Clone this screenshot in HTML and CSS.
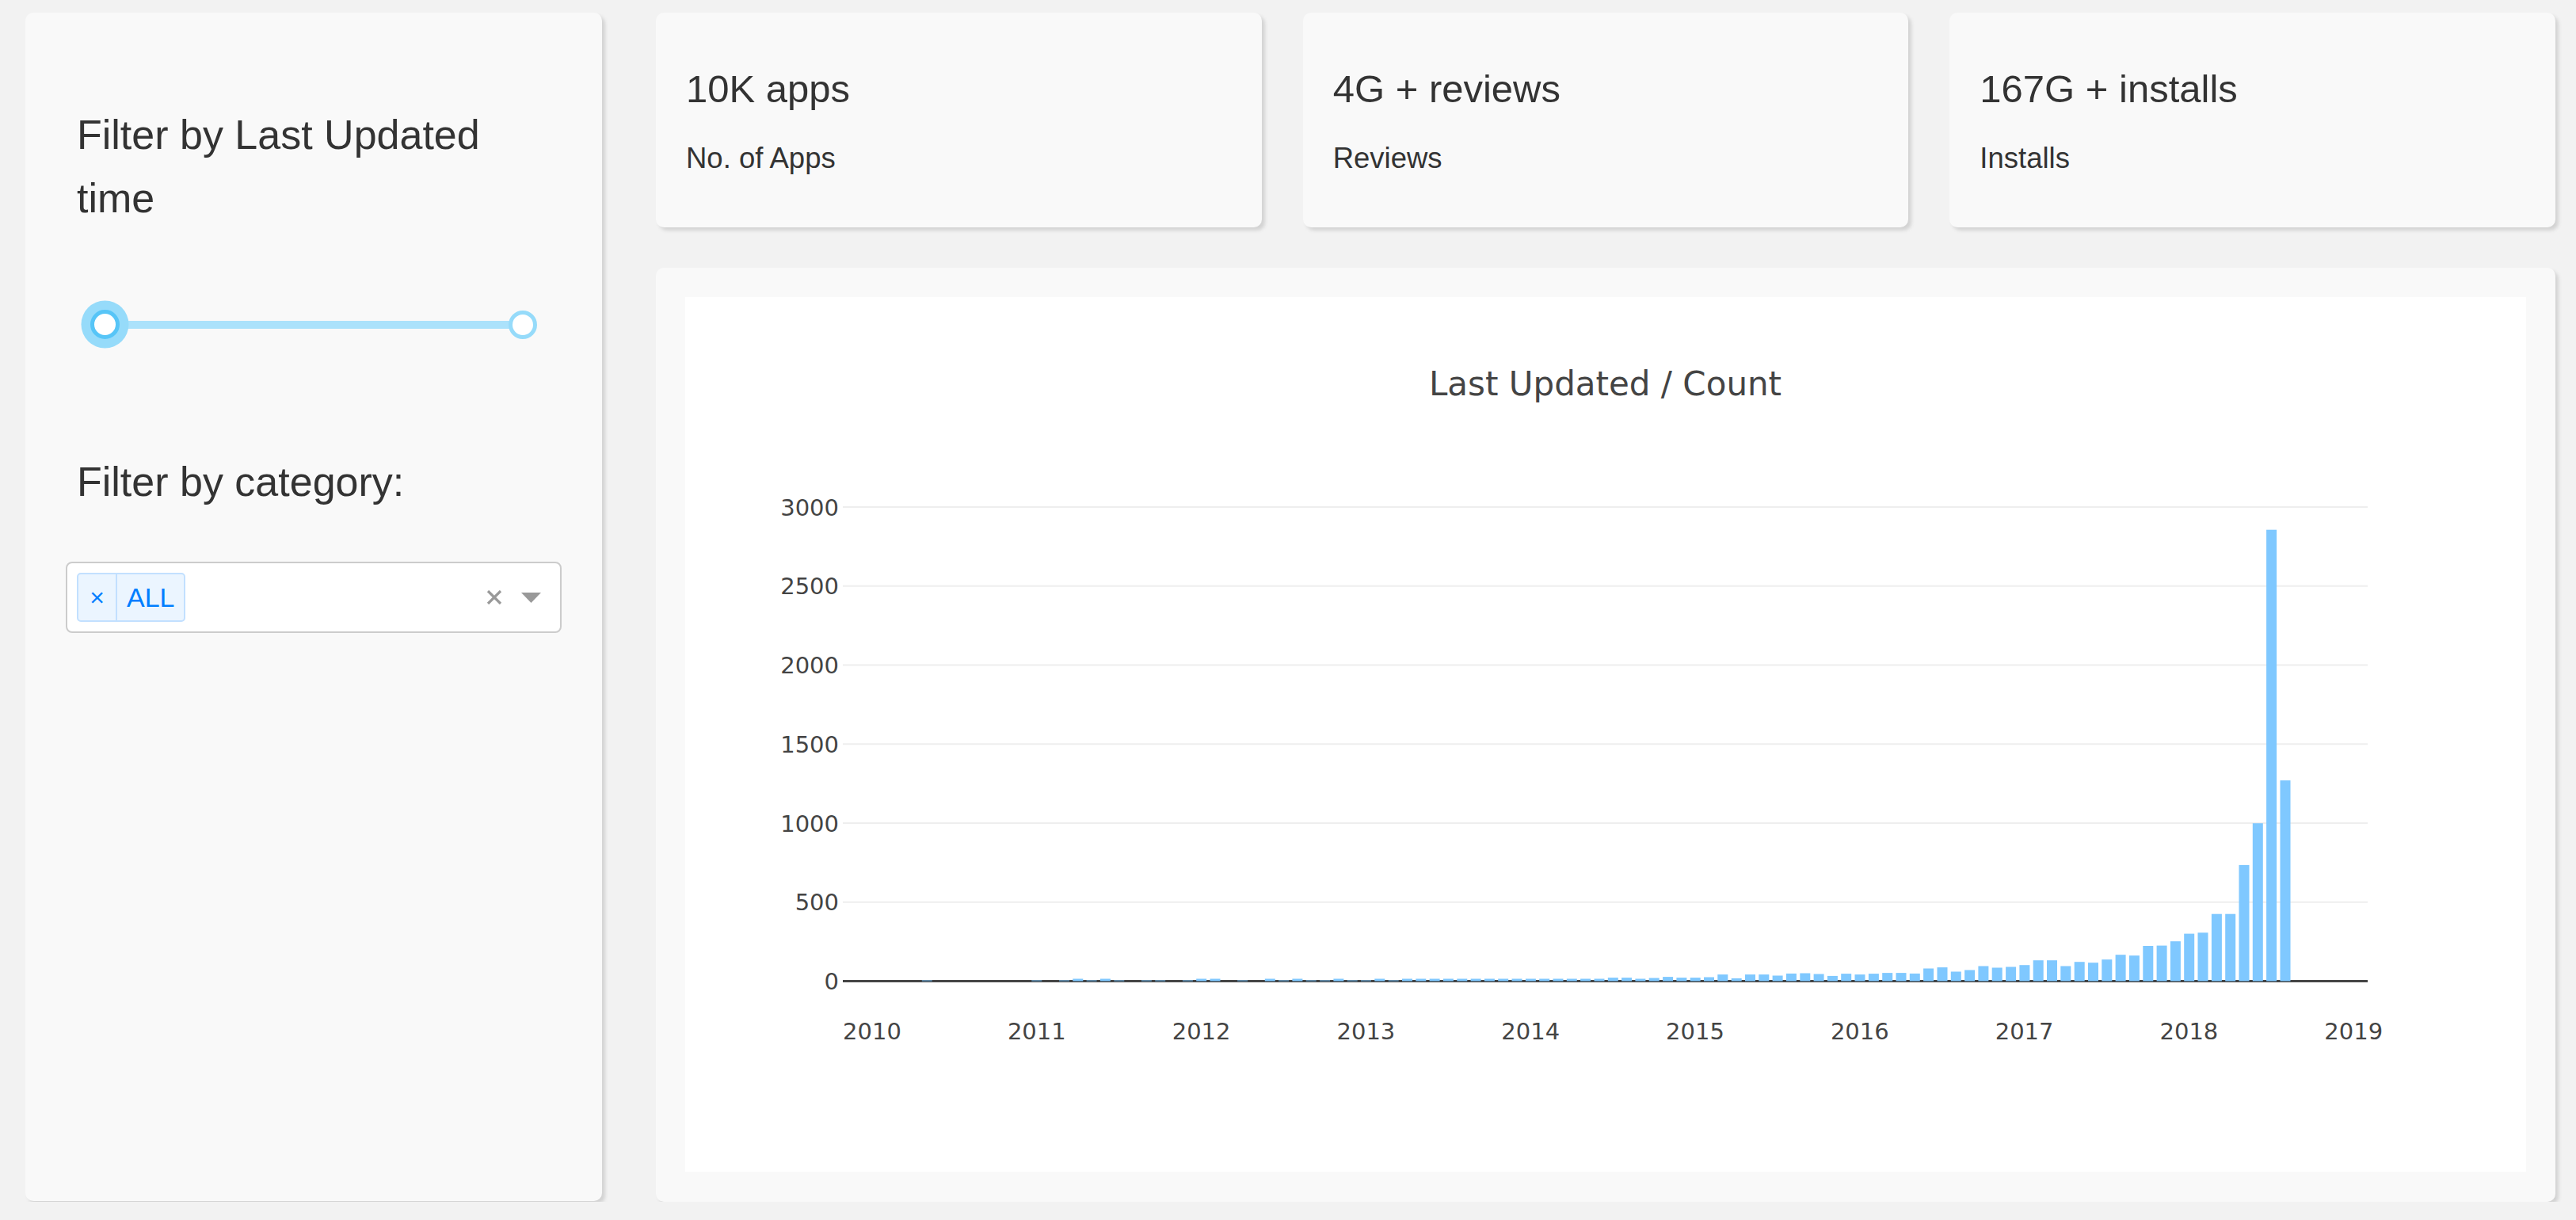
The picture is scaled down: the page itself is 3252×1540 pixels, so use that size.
FILE: index.html
```html
<!DOCTYPE html>
<html lang="en">
<head>
<meta charset="utf-8">
<title>Google Play Store Apps</title>
<link rel="stylesheet" href="styles.css">
</head>
<body>
<div class="page">
  <aside class="card controls">
    <h3 class="control-label">Filter by Last Updated time</h3>
    <div class="slider">
      <div class="slider-track"></div>
      <span class="handle handle-left"></span>
      <span class="handle handle-right"></span>
    </div>
    <h3 class="control-label category-label">Filter by category:</h3>
    <div class="select">
      <div class="tag">
        <span class="tag-icon">×</span>
        <span class="tag-label">ALL</span>
      </div>
      <span class="select-spacer"></span>
      <svg class="clear-icon" width="20" height="18" viewBox="0 0 20 18"><path d="M2 1 L18 17 M18 1 L2 17" stroke="#999" stroke-width="3.2" fill="none"/></svg>
      <svg class="arrow-icon" width="25" height="13" viewBox="0 0 25 13"><polygon points="0,0 25,0 12.5,13" fill="#999"/></svg>
    </div>
  </aside>
  <main class="right-col">
    <div class="stats">
      <div class="card stat">
        <h4 class="stat-value">10K apps</h4>
        <p class="stat-label">No. of Apps</p>
      </div>
      <div class="card stat">
        <h4 class="stat-value">4G + reviews</h4>
        <p class="stat-label">Reviews</p>
      </div>
      <div class="card stat">
        <h4 class="stat-value">167G + installs</h4>
        <p class="stat-label">Installs</p>
      </div>
    </div>
    <div class="card chart-card">
      <svg class="chart" width="2324" height="1104" viewBox="0 0 2324 1104">
        <rect x="0" y="0" width="2324" height="1104" fill="#fff"/>
        <text class="chart-title" x="1161.5" y="124" text-anchor="middle">Last Updated / Count</text>
        <g class="grid">
          <line x1="199" y1="265" x2="2124" y2="265"/>
          <line x1="199" y1="364.75" x2="2124" y2="364.75"/>
          <line x1="199" y1="464.5" x2="2124" y2="464.5"/>
          <line x1="199" y1="564.25" x2="2124" y2="564.25"/>
          <line x1="199" y1="664" x2="2124" y2="664"/>
          <line x1="199" y1="763.75" x2="2124" y2="763.75"/>
        </g>
        <line class="zero" x1="199" y1="863.5" x2="2124" y2="863.5"/>
        <g class="ytick" text-anchor="end">
          <text x="194" y="275.5">3000</text>
          <text x="194" y="375.25">2500</text>
          <text x="194" y="475">2000</text>
          <text x="194" y="574.75">1500</text>
          <text x="194" y="674.5">1000</text>
          <text x="194" y="774.25">500</text>
          <text x="194" y="874">0</text>
        </g>
        <g class="xtick" text-anchor="middle">
          <text x="236" y="937">2010</text>
          <text x="443.8" y="937">2011</text>
          <text x="651.6" y="937">2012</text>
          <text x="859.4" y="937">2013</text>
          <text x="1067.2" y="937">2014</text>
          <text x="1275" y="937">2015</text>
          <text x="1482.8" y="937">2016</text>
          <text x="1690.6" y="937">2017</text>
          <text x="1898.4" y="937">2018</text>
          <text x="2106.2" y="937">2019</text>
        </g>
        <g class="bars">
          <rect x="298.8" y="862.5" width="13" height="1"/>
          <rect x="437.3" y="862.5" width="13" height="1"/>
          <rect x="472.0" y="862.5" width="13" height="1"/>
          <rect x="489.3" y="860.5" width="13" height="3"/>
          <rect x="506.6" y="862.5" width="13" height="1"/>
          <rect x="523.9" y="860.5" width="13" height="3"/>
          <rect x="541.3" y="862.5" width="13" height="1"/>
          <rect x="575.9" y="862.5" width="13" height="1"/>
          <rect x="593.2" y="862.5" width="13" height="1"/>
          <rect x="627.9" y="862.5" width="13" height="1"/>
          <rect x="645.2" y="860.5" width="13" height="3"/>
          <rect x="662.5" y="860.5" width="13" height="3"/>
          <rect x="697.1" y="862.5" width="13" height="1"/>
          <rect x="731.8" y="860.5" width="13" height="3"/>
          <rect x="749.1" y="862.5" width="13" height="1"/>
          <rect x="766.4" y="860.5" width="13" height="3"/>
          <rect x="783.7" y="862.5" width="13" height="1"/>
          <rect x="801.1" y="862.5" width="13" height="1"/>
          <rect x="818.4" y="860.5" width="13" height="3"/>
          <rect x="835.7" y="862.5" width="13" height="1"/>
          <rect x="853.0" y="862.5" width="13" height="1"/>
          <rect x="870.3" y="860.5" width="13" height="3"/>
          <rect x="887.7" y="862.5" width="13" height="1"/>
          <rect x="905.0" y="860.5" width="13" height="3"/>
          <rect x="922.3" y="860.5" width="13" height="3"/>
          <rect x="939.6" y="860.5" width="13" height="3"/>
          <rect x="956.9" y="860.5" width="13" height="3"/>
          <rect x="974.3" y="860.5" width="13" height="3"/>
          <rect x="991.6" y="860.5" width="13" height="3"/>
          <rect x="1008.9" y="860.5" width="13" height="3"/>
          <rect x="1026.2" y="860.5" width="13" height="3"/>
          <rect x="1043.5" y="860.5" width="13" height="3"/>
          <rect x="1060.9" y="860.5" width="13" height="3"/>
          <rect x="1078.2" y="860.5" width="13" height="3"/>
          <rect x="1095.5" y="860.5" width="13" height="3"/>
          <rect x="1112.8" y="860.5" width="13" height="3"/>
          <rect x="1130.1" y="860.5" width="13" height="3"/>
          <rect x="1147.5" y="860.5" width="13" height="3"/>
          <rect x="1164.8" y="859.1" width="13" height="4.4"/>
          <rect x="1182.1" y="859.1" width="13" height="4.4"/>
          <rect x="1199.4" y="860.5" width="13" height="3"/>
          <rect x="1216.7" y="859.5" width="13" height="4"/>
          <rect x="1234.1" y="858.1" width="13" height="5.4"/>
          <rect x="1251.4" y="859.1" width="13" height="4.4"/>
          <rect x="1268.7" y="859.1" width="13" height="4.4"/>
          <rect x="1286.0" y="858.5" width="13" height="5"/>
          <rect x="1303.3" y="855.1" width="13" height="8.4"/>
          <rect x="1320.7" y="859.9" width="13" height="3.6"/>
          <rect x="1338.0" y="855.1" width="13" height="8.4"/>
          <rect x="1355.3" y="855.1" width="13" height="8.4"/>
          <rect x="1372.6" y="856.5" width="13" height="7"/>
          <rect x="1389.9" y="853.9" width="13" height="9.6"/>
          <rect x="1407.3" y="853.5" width="13" height="10"/>
          <rect x="1424.6" y="854.5" width="13" height="9"/>
          <rect x="1441.9" y="856.9" width="13" height="6.6"/>
          <rect x="1459.2" y="854.1" width="13" height="9.4"/>
          <rect x="1476.5" y="855.1" width="13" height="8.4"/>
          <rect x="1493.9" y="854.1" width="13" height="9.4"/>
          <rect x="1511.2" y="853.1" width="13" height="10.4"/>
          <rect x="1528.5" y="853.1" width="13" height="10.4"/>
          <rect x="1545.8" y="853.9" width="13" height="9.6"/>
          <rect x="1563.1" y="847.5" width="13" height="16"/>
          <rect x="1580.5" y="846.1" width="13" height="17.4"/>
          <rect x="1597.8" y="851.5" width="13" height="12"/>
          <rect x="1615.1" y="849.5" width="13" height="14"/>
          <rect x="1632.4" y="844.5" width="13" height="19"/>
          <rect x="1649.7" y="846.5" width="13" height="17"/>
          <rect x="1667.1" y="845.5" width="13" height="18"/>
          <rect x="1684.4" y="843.2" width="13" height="20.3"/>
          <rect x="1701.7" y="837.2" width="13" height="26.3"/>
          <rect x="1719.0" y="837.2" width="13" height="26.3"/>
          <rect x="1736.3" y="844.5" width="13" height="19"/>
          <rect x="1753.7" y="839.2" width="13" height="24.3"/>
          <rect x="1771.0" y="840.2" width="13" height="23.3"/>
          <rect x="1788.3" y="836.2" width="13" height="27.3"/>
          <rect x="1805.6" y="830.2" width="13" height="33.3"/>
          <rect x="1822.9" y="831.2" width="13" height="32.3"/>
          <rect x="1840.3" y="819.0" width="13" height="44.5"/>
          <rect x="1857.6" y="818.6" width="13" height="44.9"/>
          <rect x="1874.9" y="813.2" width="13" height="50.3"/>
          <rect x="1892.2" y="803.6" width="13" height="59.9"/>
          <rect x="1909.5" y="802.3" width="13" height="61.2"/>
          <rect x="1926.9" y="778.7" width="13" height="84.8"/>
          <rect x="1944.2" y="778.7" width="13" height="84.8"/>
          <rect x="1961.5" y="716.9" width="13" height="146.6"/>
          <rect x="1978.8" y="664.2" width="13" height="199.3"/>
          <rect x="1996.1" y="293.7" width="13" height="569.8"/>
          <rect x="2013.5" y="610.1" width="13" height="253.4"/>
        </g>
      </svg>
    </div>
  </main>
</div>
</body>
</html>
```

FILE: styles.css
```css
* {
  box-sizing: border-box;
}

html, body {
  margin: 0;
  padding: 0;
  background: #f2f2f2;
}

body {
  font-family: "Liberation Sans", Arial, Helvetica, sans-serif;
  color: #333;
}

.page {
  display: flex;
  gap: 68px;
  padding: 16px 26px 0 32px;
  width: 3252px;
}

.card {
  background: #f9f9f9;
  border-radius: 10px;
  box-shadow: 4px 4px 4px #d3d3d3;
}

/* ---------- left controls card ---------- */
.controls {
  width: 728px;
  height: 1500px;
  flex: none;
  padding: 38px;
}

.control-label {
  margin: 76px 27px 0 27px;
  font-size: 52px;
  line-height: 80px;
  font-weight: normal;
}

.category-label {
  margin-top: 128.5px;
}

.slider {
  position: relative;
  height: 60px;
  margin: 89.5px 62px 0 62px;
  display: flex;
  align-items: center;
}

.slider-track {
  flex: 1;
  height: 10px;
  background: #abe2fb;
}

.handle {
  position: absolute;
  top: 50%;
  border-radius: 50%;
  background: #fff;
}

.handle-left {
  left: -18.5px;
  width: 37px;
  height: 37px;
  margin-top: -18.5px;
  border: 5.5px solid #57c5f7;
  box-shadow: 0 0 0 11.5px #96dbfa;
}

.handle-right {
  right: -18px;
  width: 36px;
  height: 36px;
  margin-top: -18px;
  border: 5px solid #96dbfa;
}

.select {
  display: flex;
  align-items: center;
  height: 90px;
  margin: 61px 13px 0 13px;
  padding: 0 24px 0 12px;
  background: #fff;
  border: 2px solid #ccc;
  border-radius: 8px;
}

.tag {
  display: flex;
  height: 62px;
  border: 2px solid #c2e0ff;
  border-radius: 5px;
  background: #ebf5ff;
  color: #007eff;
}

.tag-icon {
  width: 49px;
  border-right: 2px solid #c2e0ff;
  display: flex;
  align-items: center;
  justify-content: center;
  font-size: 32px;
  line-height: 1;
}

.tag-label {
  padding: 0 11px 0 12px;
  font-size: 34px;
  line-height: 58px;
}

.select-spacer {
  flex: 1;
}

.clear-icon {
  display: block;
  margin-right: 24px;
}

.arrow-icon {
  display: block;
}

/* ---------- right column ---------- */
.right-col {
  flex: 1;
  display: flex;
  flex-direction: column;
  height: 1501px;
}

.stats {
  display: flex;
  gap: 52px;
}

.stat {
  flex: 1;
  padding: 38px;
  height: 271px;
}

.stat-value {
  margin: 30px 0 0 0;
  font-size: 49px;
  line-height: 56px;
  font-weight: normal;
}

.stat-label {
  margin: 39px 0 0 0;
  font-size: 36.5px;
  line-height: 42px;
}

.chart-card {
  flex: 1;
  margin-top: 51px;
  padding: 37px 37px 38px 37px;
}

.chart {
  display: block;
}

.chart-title {
  font-family: "DejaVu Sans", Verdana, sans-serif;
  font-size: 42px;
  fill: #444;
}

.grid line {
  stroke: #eee;
  stroke-width: 2;
}

.zero {
  stroke: #444;
  stroke-width: 3;
}

.ytick text,
.xtick text {
  font-family: "DejaVu Sans", Verdana, sans-serif;
  font-size: 29px;
  fill: #444;
}

.bars rect {
  fill: #7fc8ff;
}
```
